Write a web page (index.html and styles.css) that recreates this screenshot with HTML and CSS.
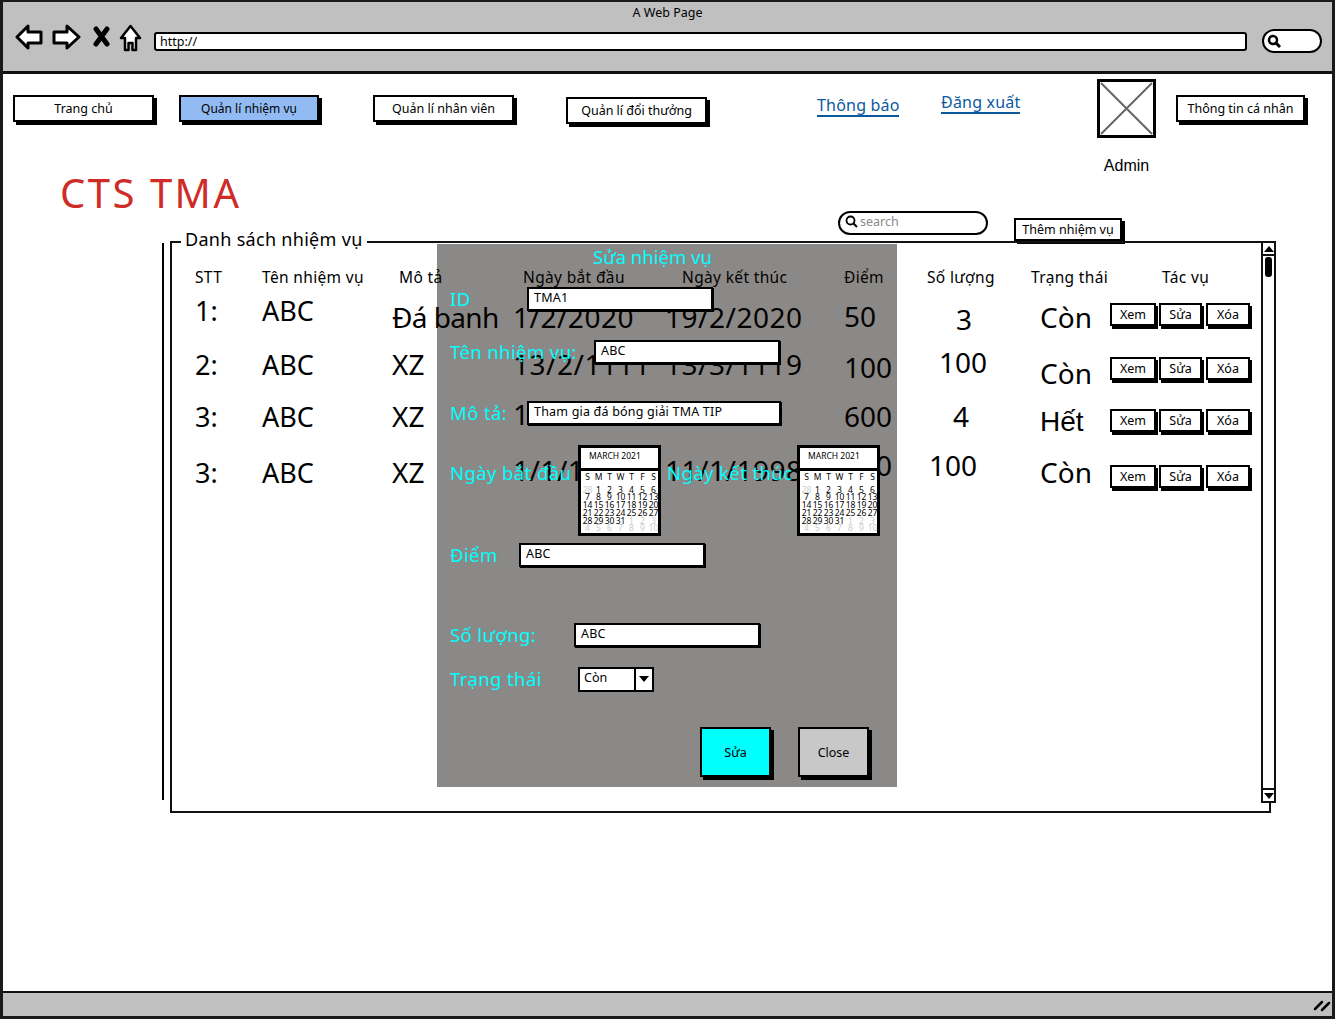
FILE: index.html
```html
<!DOCTYPE html>
<html lang="vi">
<head>
	<meta charset="UTF-8">
	<title>A Web Page</title>
	<link rel="stylesheet" href="styles.css">
</head>
<body>
	<div class="window">
		<!-- browser chrome -->
		<header class="browser-bar">
			<div class="browser-title">A Web Page</div>
			<div class="browser-tools">
				<svg class="ico-back" width="28" height="26" viewBox="0 0 28 26"><path d="M2 13 L13 2 V8 H26 V19 H13 V24 Z" fill="#fff" stroke="#000" stroke-width="3" stroke-linejoin="round"/></svg>
				<svg class="ico-forward" width="29" height="26" viewBox="0 0 29 26"><path d="M27 13 L15 2 V8 H2 V19 H15 V24 Z" fill="#fff" stroke="#000" stroke-width="3" stroke-linejoin="round"/></svg>
				<svg class="ico-stop" width="17" height="21" viewBox="0 0 17 21"><path d="M3 3 L14 18 M14 3 L3 18" stroke="#000" stroke-width="5" stroke-linecap="round"/></svg>
				<svg class="ico-home" width="23" height="28" viewBox="0 0 23 28"><path d="M11.500 2 L21 14 H17 V26 H13.500 V19 H9.500 V26 H6 V14 H2 Z" fill="#fff" stroke="#000" stroke-width="2.500" stroke-linejoin="round"/></svg>
				<div class="address-bar">http://</div>
				<div class="browser-search">
					<svg width="14" height="14" viewBox="0 0 14 14"><circle cx="6" cy="6" r="4" fill="none" stroke="#000" stroke-width="2.500"/><path d="M9 9 L13 13" stroke="#000" stroke-width="3"/></svg>
				</div>
			</div>
		</header>

		<main class="page">
			<nav class="top-nav">
				<a class="btn nav-home" href="javascript:;">Trang chủ</a>
				<a class="btn btn-active nav-tasks" href="javascript:;">Quản lí nhiệm vụ</a>
				<a class="btn nav-staff" href="javascript:;">Quản lí nhân viên</a>
				<a class="btn nav-reward" href="javascript:;">Quản lí đổi thưởng</a>
				<a class="top-link link-notice" href="javascript:;">Thông báo</a>
				<a class="top-link link-logout" href="javascript:;">Đăng xuất</a>
				<div class="profile">
					<svg class="avatar" width="59" height="59" viewBox="0 0 59 59"><rect x="1.500" y="1.500" width="56" height="56" fill="#fff" stroke="#000" stroke-width="3"/><path d="M4 4 L55 55 M55 4 L4 55" stroke="#666" stroke-width="2"/></svg>
					<div class="profile-name">Admin</div>
				</div>
				<a class="btn nav-info" href="javascript:;">Thông tin cá nhân</a>
			</nav>

			<h1 class="logo">CTS TMA</h1>

			<div class="toolbar">
				<div class="search-box">
					<svg width="13" height="13" viewBox="0 0 13 13"><circle cx="5.500" cy="5.500" r="4" fill="none" stroke="#000" stroke-width="1.800"/><path d="M8.500 8.500 L12 12" stroke="#000" stroke-width="2"/></svg>
					<span>search</span>
				</div>
				<a class="btn btn-add" href="javascript:;">Thêm nhiệm vụ</a>
			</div>

			<div class="panel-wrap">
				<div class="stray-line"></div>
				<section class="panel">
					<div class="panel-legend">Danh sách nhiệm vụ</div>

					<div class="task-table">
						<div class="th">STT</div>
						<div class="th">Tên nhiệm vụ</div>
						<div class="th th-desc">Mô tả</div>
						<div class="th th-start">Ngày bắt đầu</div>
						<div class="th th-end">Ngày kết thúc</div>
						<div class="th">Điểm</div>
						<div class="th">Số lượng</div>
						<div class="th">Trạng thái</div>
						<div class="th th-action">Tác vụ</div>

						<div class="td">1:</div>
						<div class="td">ABC</div>
						<div class="td td-big td-name low-7">Đá banh</div>
						<div class="td td-big td-date low-7">1/2/2020</div>
						<div class="td td-big td-date low-7">19/2/2020</div>
						<div class="td td-big low-6">50</div>
						<div class="td td-big low-9 qty-1">3</div>
						<div class="td td-big low-7 status">Còn</div>
						<div class="actions">
							<a class="btn btn-sm btn-xem" href="javascript:;">Xem</a>
							<a class="btn btn-sm btn-sua" href="javascript:;">Sửa</a>
							<a class="btn btn-sm btn-xoa" href="javascript:;">Xóa</a>
						</div>

						<div class="td">2:</div>
						<div class="td">ABC</div>
						<div class="td td-big">XZ</div>
						<div class="td td-big td-date">13/2/1111</div>
						<div class="td td-big td-date">13/3/1119</div>
						<div class="td td-big low-3">100</div>
						<div class="td td-big high-2 qty-2">100</div>
						<div class="td td-big low-9 status">Còn</div>
						<div class="actions">
							<a class="btn btn-sm btn-xem" href="javascript:;">Xem</a>
							<a class="btn btn-sm btn-sua" href="javascript:;">Sửa</a>
							<a class="btn btn-sm btn-xoa" href="javascript:;">Xóa</a>
						</div>

						<div class="td">3:</div>
						<div class="td">ABC</div>
						<div class="td td-big">XZ</div>
						<div class="td td-big td-date high-2">1/1/1111</div>
						<div class="td td-big td-date high-2">1/1/1111</div>
						<div class="td td-big">600</div>
						<div class="td td-big qty-3">4</div>
						<div class="td td-big low-6 status status-out">Hết</div>
						<div class="actions">
							<a class="btn btn-sm btn-xem" href="javascript:;">Xem</a>
							<a class="btn btn-sm btn-sua" href="javascript:;">Sửa</a>
							<a class="btn btn-sm btn-xoa" href="javascript:;">Xóa</a>
						</div>

						<div class="td">3:</div>
						<div class="td">ABC</div>
						<div class="td td-big">XZ</div>
						<div class="td td-big td-date high-2">1/1/1998</div>
						<div class="td td-big td-date high-2">11/1/1998</div>
						<div class="td td-big high-7">100</div>
						<div class="td td-big high-7 qty-4">100</div>
						<div class="td td-big status">Còn</div>
						<div class="actions">
							<a class="btn btn-sm btn-xem" href="javascript:;">Xem</a>
							<a class="btn btn-sm btn-sua" href="javascript:;">Sửa</a>
							<a class="btn btn-sm btn-xoa" href="javascript:;">Xóa</a>
						</div>
					</div>

					<div class="scrollbar">
						<div class="scroll-btn"><span class="tri-up"></span></div>
						<div class="scroll-thumb"></div>
						<div class="scroll-btn scroll-btn-down"><span class="tri-down"></span></div>
					</div>

					<!-- dialog over the table -->
					<div class="modal">
						<div class="modal-title">Sửa nhiệm vụ</div>

						<div class="form-row row-id">
							<label class="form-label w-id">ID</label>
							<div class="field">TMA1</div>
						</div>
						<div class="form-row row-name">
							<label class="form-label w-name">Tên nhiệm vụ:</label>
							<div class="field">ABC</div>
						</div>
						<div class="form-row row-desc">
							<label class="form-label w-id">Mô tả:</label>
							<div class="field field-wide">Tham gia đá bóng giải TMA TIP</div>
						</div>

						<div class="form-row row-dates">
							<label class="form-label w-start">Ngày bắt đầu</label>
							<div class="calendar">
								<div class="cal-head">MARCH 2021</div>
								<div class="cal-grid">
									<b>S</b><b>M</b><b>T</b><b>W</b><b>T</b><b>F</b><b>S</b>
									<i>28</i><span>1</span><span>2</span><span>3</span><span>4</span><span>5</span><span>6</span>
									<span>7</span><span>8</span><span>9</span><span>10</span><span>11</span><span>12</span><span>13</span>
									<span>14</span><span>15</span><span>16</span><span>17</span><span>18</span><span>19</span><span>20</span>
									<span>21</span><span>22</span><span>23</span><span>24</span><span>25</span><span>26</span><span>27</span>
									<span>28</span><span>29</span><span>30</span><span>31</span><i>1</i><i>2</i><i>3</i>
									<i>4</i><i>5</i><i>6</i><i>7</i><i>8</i><i>9</i><i>10</i>
								</div>
							</div>
							<label class="form-label w-end">Ngày kết thúc</label>
							<div class="calendar">
								<div class="cal-head">MARCH 2021</div>
								<div class="cal-grid">
									<b>S</b><b>M</b><b>T</b><b>W</b><b>T</b><b>F</b><b>S</b>
									<i>28</i><span>1</span><span>2</span><span>3</span><span>4</span><span>5</span><span>6</span>
									<span>7</span><span>8</span><span>9</span><span>10</span><span>11</span><span>12</span><span>13</span>
									<span>14</span><span>15</span><span>16</span><span>17</span><span>18</span><span>19</span><span>20</span>
									<span>21</span><span>22</span><span>23</span><span>24</span><span>25</span><span>26</span><span>27</span>
									<span>28</span><span>29</span><span>30</span><span>31</span><i>1</i><i>2</i><i>3</i>
									<i>4</i><i>5</i><i>6</i><i>7</i><i>8</i><i>9</i><i>10</i>
								</div>
							</div>
						</div>

						<div class="form-row row-score">
							<label class="form-label w-score">Điểm</label>
							<div class="field">ABC</div>
						</div>
						<div class="form-row row-qty">
							<label class="form-label w-qty">Số lượng:</label>
							<div class="field">ABC</div>
						</div>
						<div class="form-row row-state">
							<label class="form-label w-start">Trạng thái</label>
							<div class="select">
								<span class="select-value">Còn</span>
								<span class="select-arrow"><span class="tri-down"></span></span>
							</div>
						</div>

						<div class="modal-actions">
							<a class="btn btn-save" href="javascript:;">Sửa</a>
							<a class="btn btn-close" href="javascript:;">Close</a>
						</div>
					</div>
				</section>
			</div>
		</main>

		<footer class="status-bar">
			<svg width="18" height="12" viewBox="0 0 18 12"><path d="M2 9 L9 2 M9 10 L16 3" stroke="#000" stroke-width="2.500" stroke-linecap="round"/></svg>
		</footer>
	</div>
</body>
</html>
```

FILE: styles.css
```css
html, body {
	margin: 0;
	padding: 0;
}
body {
	font-family: "Noto Sans", "Liberation Sans", sans-serif;
	color: #000;
	background: #fff;
}
a {
	text-decoration: none;
	color: #000;
}
svg {
	display: block;
	flex: none;
}

.window {
	box-sizing: border-box;
	width: 1335px;
	height: 1019px;
	display: flex;
	flex-direction: column;
	border: 3px solid #1a1a1a;
	border-top-width: 2px;
	overflow: hidden;
}

/* browser chrome */
.browser-bar {
	flex: none;
	height: 69px;
	background: #c0c0c0;
	border-bottom: 3px solid #111;
}
.browser-title {
	height: 22px;
	line-height: 22px;
	font-size: 12.500px;
	text-align: center;
}
.browser-tools {
	display: flex;
	align-items: flex-start;
	padding-left: 12px;
}
.ico-forward { margin: 0 0 0 9px; }
.ico-stop { margin: 2px 0 0 12px; }
.ico-home { margin: 0 0 0 9px; }
.address-bar {
	box-sizing: border-box;
	width: 1093px;
	height: 19px;
	margin: 8px 0 0 12px;
	padding-left: 4px;
	background: #fff;
	border: 2px solid #000;
	border-radius: 3px;
	line-height: 15px;
	font-size: 12.500px;
}
.browser-search {
	box-sizing: border-box;
	width: 60px;
	height: 24px;
	margin: 5px 0 0 15px;
	padding: 3px 0 0 3px;
	background: #fff;
	border: 2px solid #000;
	border-radius: 12px;
}

.page {
	flex: 1;
	min-height: 0;
}

/* buttons */
.btn {
	box-sizing: border-box;
	display: flex;
	align-items: center;
	justify-content: center;
	flex: none;
	height: 27px;
	background: #fff;
	border: 2px solid #000;
	box-shadow: 3px 3px 0 #000;
	font-size: 12.500px;
	white-space: nowrap;
}
.btn-active {
	background: #92bbf3;
}

.top-nav {
	display: flex;
	align-items: flex-start;
	height: 100px;
	padding-left: 10px;
}
.nav-home { width: 141px; margin-top: 21px; }
.nav-tasks { width: 140px; margin: 21px 0 0 25px; font-size: 12px; }
.nav-staff { width: 141px; margin: 21px 0 0 54px; }
.nav-reward { width: 141px; margin: 23px 0 0 52px; }
.nav-info { width: 129px; margin: 21px 0 0 20px; }
.top-link {
	flex: none;
	color: #0b5a9e;
	font-size: 16px;
	line-height: 20px;
	border-bottom: 2px solid #0b5a9e;
	letter-spacing: .2px;
	white-space: nowrap;
}
.link-notice { width: 82px; margin: 21px 0 0 110px; }
.link-logout { width: 79px; margin: 18px 0 0 42px; }
.profile {
	width: 59px;
	margin: 5px 0 0 77px;
}
.profile-name {
	margin-top: 18px;
	font-family: "Liberation Sans", sans-serif;
	font-size: 16px;
	line-height: 20px;
	text-align: center;
}

.logo {
	height: 37px;
	margin: 0 0 0 57px;
	font-size: 40px;
	font-weight: 400;
	line-height: 37px;
	letter-spacing: 2.500px;
	color: #cf2b27;
}

.toolbar {
	display: flex;
	align-items: flex-start;
	height: 30px;
	padding-left: 835px;
}
.search-box {
	box-sizing: border-box;
	display: flex;
	align-items: center;
	gap: 2px;
	width: 150px;
	height: 24px;
	padding: 0 0 3px 5px;
	background: #fff;
	border: 2px solid #000;
	border-radius: 12px;
	font-size: 12.500px;
	color: #888;
}
.btn-add {
	width: 108px;
	height: 23px;
	margin: 7px 0 0 26px;
}

/* task panel */
.panel-wrap {
	display: flex;
	align-items: flex-start;
	padding-left: 159px;
}
.stray-line {
	flex: none;
	width: 2px;
	height: 557px;
	margin: 2px 6px 0 0;
	background: #000;
}
.panel {
	box-sizing: border-box;
	position: relative;
	width: 1101px;
	height: 572px;
	border: 2px solid #111;
}
.panel-legend {
	position: absolute;
	left: 9px;
	top: -16px;
	padding: 0 4px;
	background: #fff;
	font-size: 18px;
	line-height: 24px;
	letter-spacing: .3px;
}

.task-table {
	display: grid;
	grid-template-columns: 67px 130px 121px 152px 179px 83px 104px 79px 150px;
	grid-template-rows: 18px 48px 60px 44px 68px;
	align-items: center;
	padding: 25px 0 0 23px;
	white-space: nowrap;
}
.th {
	font-size: 15.500px;
	line-height: 18px;
	letter-spacing: .35px;
}
.th-desc { margin-left: 7px; }
.th-start { margin-left: 10px; }
.th-end { margin-left: 17px; }
.th-action { margin-left: 52px; }
.td {
	margin-top: 2px;
	font-size: 27px;
	line-height: 32px;
}
.td-big {
	margin-top: 0;
	font-size: 28px;
}
.td-name { letter-spacing: -.6px; }
.td-date { letter-spacing: .5px; }
.low-3 { margin-top: 6px; }
.low-6 { margin-top: 12px; }
.low-7 { margin-top: 14px; }
.low-9 { margin-top: 18px; }
.high-2 { margin-top: -4px; }
.high-7 { margin-top: -14px; }
.qty-1 { margin-left: 29px; }
.qty-2 { margin-left: 12px; }
.qty-3 { margin-left: 26px; }
.qty-4 { margin-left: 2px; }
.status { margin-left: 9px; }
.status-out { font-family: "Liberation Sans", sans-serif; }

.actions {
	display: flex;
	margin-top: 9px;
}
.btn-sm {
	height: 23px;
	box-shadow: 2px 3px 0 #000;
}
.btn-xem { width: 46px; }
.btn-sua { width: 43px; margin-left: 3px; }
.btn-xoa { width: 44px; margin-left: 4px; }

.scrollbar {
	box-sizing: border-box;
	position: absolute;
	top: -2px;
	right: -7px;
	display: flex;
	flex-direction: column;
	width: 15px;
	height: 562px;
	background: #fff;
	border: 2px solid #111;
	border-top: 0;
	border-bottom: 0;
}
.scroll-btn {
	display: flex;
	align-items: center;
	justify-content: center;
	height: 11px;
	border-top: 2px solid #111;
	border-bottom: 2px solid #111;
}
.scroll-btn-down {
	margin-top: auto;
}
.scroll-thumb {
	width: 7px;
	height: 20px;
	margin: 1px 0 0 2px;
	background: #000;
	border-radius: 3px;
}
.tri-up {
	width: 0;
	height: 0;
	border: 5px solid transparent;
	border-top: 0;
	border-bottom: 6px solid #000;
}
.tri-down {
	width: 0;
	height: 0;
	border: 5px solid transparent;
	border-bottom: 0;
	border-top: 6px solid #000;
}

/* edit dialog */
.modal {
	box-sizing: border-box;
	position: absolute;
	left: 265px;
	top: 1px;
	display: flex;
	flex-direction: column;
	width: 460px;
	height: 543px;
	padding-left: 12px;
	background: rgba(8, 4, 0, .47);
}
.modal-title {
	height: 26px;
	margin-left: 144px;
	font-size: 18.500px;
	line-height: 26px;
	white-space: nowrap;
	color: #0ff;
}
.form-row {
	display: flex;
	align-items: center;
	flex: none;
	height: 24px;
}
.row-id { margin-top: 17px; }
.row-name { margin-top: 29px; }
.row-desc { margin-top: 37px; }
.row-dates {
	align-items: flex-start;
	height: 91px;
	margin-top: 20px;
}
.row-dates .form-label {
	margin-top: 15px;
}
.row-score { margin-top: 7px; }
.row-qty { margin-top: 56px; }
.row-state { margin-top: 20px; }
.form-label {
	flex: none;
	margin-left: 1px;
	font-size: 18.500px;
	line-height: 26px;
	letter-spacing: .4px;
	white-space: nowrap;
	color: #0ff;
}
.w-id { width: 77px; }
.w-name { width: 144px; }
.w-start { width: 128px; }
.w-end { width: 130px; margin-left: 6px; }
.w-score { width: 69px; }
.w-qty { width: 124px; }
.field {
	box-sizing: border-box;
	width: 186px;
	height: 24px;
	padding-left: 5px;
	background: #fff;
	border: 2px solid #000;
	box-shadow: 1px 1px 0 #000;
	font-size: 12.500px;
	line-height: 18px;
	letter-spacing: .2px;
}
.field-wide {
	width: 254px;
}

.calendar {
	box-sizing: border-box;
	flex: none;
	width: 83px;
	height: 91px;
	background: #fff;
	border: 3px solid #000;
	overflow: hidden;
}
.cal-head {
	height: 20px;
	padding-left: 8px;
	border-bottom: 3px solid #000;
	font-size: 8.500px;
	line-height: 16px;
	white-space: nowrap;
}
.cal-grid {
	display: grid;
	grid-template-columns: repeat(7, 11px);
	grid-template-rows: 12.500px;
	grid-auto-rows: 7.800px;
	padding: 2px 0 0 1px;
	font-size: 8.500px;
	line-height: 8px;
	text-align: center;
}
.cal-grid b {
	font-weight: 400;
}
.cal-grid i {
	font-style: normal;
	color: #ccc;
}

.select {
	box-sizing: border-box;
	display: flex;
	width: 76px;
	height: 25px;
	background: #fff;
	border: 2px solid #000;
	font-size: 12.500px;
	line-height: 18px;
}
.select-value {
	flex: 1;
	padding-left: 4px;
}
.select-arrow {
	display: flex;
	align-items: center;
	justify-content: center;
	width: 16px;
	border-left: 2px solid #000;
}

.modal-actions {
	display: flex;
	margin: 36px 0 0 251px;
}
.btn-save {
	width: 71px;
	height: 50px;
	background: #0ff;
}
.btn-close {
	width: 71px;
	height: 50px;
	margin-left: 27px;
	background: #c8c8c8;
}

.status-bar {
	box-sizing: border-box;
	flex: none;
	display: flex;
	justify-content: flex-end;
	align-items: center;
	height: 25px;
	padding: 3px 1px 0 0;
	background: #c0c0c0;
	border-top: 2px solid #111;
}
```
